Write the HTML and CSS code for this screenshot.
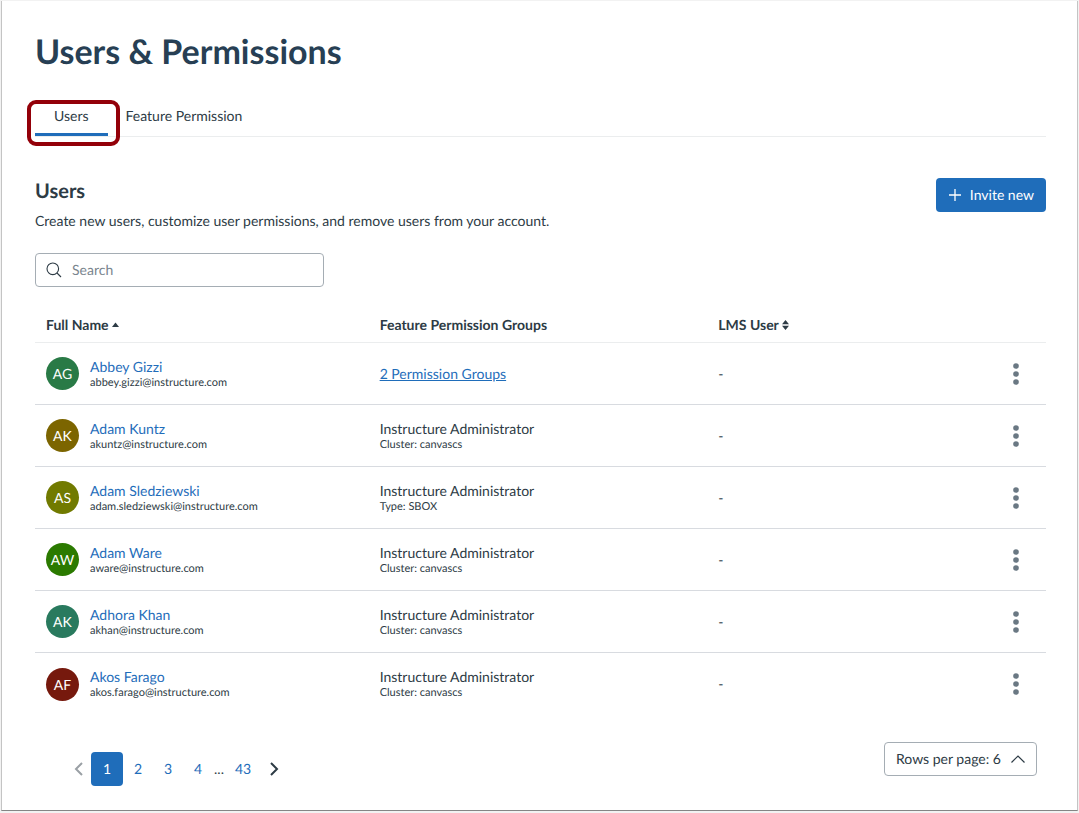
FILE: index.html
```html
<!DOCTYPE html>
<html lang="en">
<head>
    <meta charset="UTF-8">
    <meta name="viewport" content="width=device-width, initial-scale=1.0">
    <title>Users &amp; Permissions</title>
    <link rel="stylesheet" href="styles.css">
</head>
<body>
    <main class="page">
        <h1>Users &amp; Permissions</h1>

        <div class="tabs" role="tablist">
            <button class="tab active" role="tab" aria-selected="true">Users<span class="highlight"></span></button>
            <button class="tab" role="tab" aria-selected="false">Feature Permission</button>
        </div>

        <section class="intro">
            <div>
                <h2>Users</h2>
                <p>Create new users, customize user permissions, and remove users from your account.</p>
            </div>
            <button class="invite">
                <svg width="12" height="12" viewBox="0 0 12 12"><path d="M6 0v12M0 6h12" stroke="currentColor" stroke-width="1.3"/></svg>
                Invite new
            </button>
        </section>

        <label class="search">
            <svg width="16" height="16" viewBox="0 0 16 16" fill="none" stroke="currentColor" stroke-width="1.1"><circle cx="6.8" cy="6.8" r="5.8"/><path d="M11 11l4 4"/></svg>
            <input type="text" placeholder="Search" aria-label="Search">
        </label>

        <table class="users">
            <thead>
                <tr>
                    <th class="col-name">Full Name <svg class="sort" width="7" height="10" viewBox="0 0 7 10"><path d="M0 7L3.5 2.500 7 7z"/></svg></th>
                    <th class="col-groups">Feature Permission Groups</th>
                    <th class="col-lms">LMS User <svg class="sort" width="7" height="10" viewBox="0 0 7 10"><path d="M0 4.300L3.5 0 7 4.300zM0 5.700h7L3.5 10z"/></svg></th>
                    <th class="col-menu"></th>
                </tr>
            </thead>
            <tbody>
                <tr>
                    <td><div class="user"><span class="avatar green">AG</span><div><a class="name" href="#">Abbey Gizzi</a><span class="small">abbey.gizzi@instructure.com</span></div></div></td>
                    <td><a class="groups" href="#">2 Permission Groups</a></td>
                    <td>-</td>
                    <td class="col-menu"><button class="menu" aria-label="Options for Abbey Gizzi"><svg width="6" height="22" viewBox="0 0 6 22"><circle cx="3" cy="3" r="2.8"/><circle cx="3" cy="11" r="2.8"/><circle cx="3" cy="19" r="2.8"/></svg></button></td>
                </tr>
                <tr>
                    <td><div class="user"><span class="avatar brown">AK</span><div><a class="name" href="#">Adam Kuntz</a><span class="small">akuntz@instructure.com</span></div></div></td>
                    <td><span class="role">Instructure Administrator</span><span class="small">Cluster: canvascs</span></td>
                    <td>-</td>
                    <td class="col-menu"><button class="menu" aria-label="Options for Adam Kuntz"><svg width="6" height="22" viewBox="0 0 6 22"><circle cx="3" cy="3" r="2.8"/><circle cx="3" cy="11" r="2.8"/><circle cx="3" cy="19" r="2.8"/></svg></button></td>
                </tr>
                <tr>
                    <td><div class="user"><span class="avatar olive">AS</span><div><a class="name" href="#">Adam Sledziewski</a><span class="small">adam.sledziewski@instructure.com</span></div></div></td>
                    <td><span class="role">Instructure Administrator</span><span class="small">Type: SBOX</span></td>
                    <td>-</td>
                    <td class="col-menu"><button class="menu" aria-label="Options for Adam Sledziewski"><svg width="6" height="22" viewBox="0 0 6 22"><circle cx="3" cy="3" r="2.8"/><circle cx="3" cy="11" r="2.8"/><circle cx="3" cy="19" r="2.8"/></svg></button></td>
                </tr>
                <tr>
                    <td><div class="user"><span class="avatar grass">AW</span><div><a class="name" href="#">Adam Ware</a><span class="small">aware@instructure.com</span></div></div></td>
                    <td><span class="role">Instructure Administrator</span><span class="small">Cluster: canvascs</span></td>
                    <td>-</td>
                    <td class="col-menu"><button class="menu" aria-label="Options for Adam Ware"><svg width="6" height="22" viewBox="0 0 6 22"><circle cx="3" cy="3" r="2.8"/><circle cx="3" cy="11" r="2.8"/><circle cx="3" cy="19" r="2.8"/></svg></button></td>
                </tr>
                <tr>
                    <td><div class="user"><span class="avatar teal">AK</span><div><a class="name" href="#">Adhora Khan</a><span class="small">akhan@instructure.com</span></div></div></td>
                    <td><span class="role">Instructure Administrator</span><span class="small">Cluster: canvascs</span></td>
                    <td>-</td>
                    <td class="col-menu"><button class="menu" aria-label="Options for Adhora Khan"><svg width="6" height="22" viewBox="0 0 6 22"><circle cx="3" cy="3" r="2.8"/><circle cx="3" cy="11" r="2.8"/><circle cx="3" cy="19" r="2.8"/></svg></button></td>
                </tr>
                <tr>
                    <td><div class="user"><span class="avatar red">AF</span><div><a class="name" href="#">Akos Farago</a><span class="small">akos.farago@instructure.com</span></div></div></td>
                    <td><span class="role">Instructure Administrator</span><span class="small">Cluster: canvascs</span></td>
                    <td>-</td>
                    <td class="col-menu"><button class="menu" aria-label="Options for Akos Farago"><svg width="6" height="22" viewBox="0 0 6 22"><circle cx="3" cy="3" r="2.8"/><circle cx="3" cy="11" r="2.8"/><circle cx="3" cy="19" r="2.8"/></svg></button></td>
                </tr>
            </tbody>
        </table>

        <div class="table-footer">
            <nav class="pagination" aria-label="Pages">
                <button class="arrow" aria-label="Previous page" disabled><svg width="9" height="14" viewBox="0 0 9 14"><path d="M8 1L2 7l6 6"/></svg></button>
                <button class="page-number current" aria-current="page">1</button>
                <button class="page-number">2</button>
                <button class="page-number">3</button>
                <button class="page-number">4</button>
                <span class="dots">...</span>
                <button class="page-number last">43</button>
                <button class="arrow next" aria-label="Next page"><svg width="9" height="14" viewBox="0 0 9 14"><path d="M1 1l6 6-6 6"/></svg></button>
            </nav>
            <div class="rows">
                <select aria-label="Rows per page">
                    <option>Rows per page: 6</option>
                    <option>Rows per page: 12</option>
                    <option>Rows per page: 24</option>
                </select>
                <svg width="14" height="8" viewBox="0 0 14 8"><path d="M0.5 7.5L7 1l6.500 6.500"/></svg>
            </div>
        </div>
    </main>
</body>
</html>
```

FILE: styles.css
```css
:root {
    --blue: #1f6dba;
    --ink: #2d3b45;
    --heading: #273f54;
    --line: #d8dbe0;
    --line-light: #ebedee;
    --field-border: #a5adb4;
}

* {
    box-sizing: border-box;
}

body {
    margin: 0;
    padding: 1px;
    background-color: #f2f2f2;
    color: var(--ink);
    font-family: Lato, sans-serif;
    font-size: 14px;
    line-height: 20px;
    text-rendering: geometricPrecision;
}

button,
input,
select {
    font: inherit;
    color: inherit;
    text-rendering: inherit;
}

button {
    padding: 0;
    border: none;
    background: none;
    cursor: pointer;
}

.page {
    padding: 29px 31px 24px 33px;
    background-color: white;
    border: 1px solid #c4c4c4;
    border-top: none;
    border-bottom: 1px solid #858585;
}

h1 {
    margin: 0;
    color: var(--heading);
    font-size: 34px;
    line-height: 44px;
    font-weight: 700;
}

.tabs {
    display: flex;
    margin-top: 27px;
    border-bottom: 1px solid var(--line-light);
}

.tab {
    position: relative;
    height: 35px;
    padding: 0 18px 3px;
    border-bottom: 3px solid transparent;
}

.tab.active {
    padding: 0 19px 3px;
    border-bottom-color: var(--blue);
}

/* red callout ring around the current tab */
.highlight {
    position: absolute;
    top: -1px;
    right: -12px;
    bottom: -13px;
    left: -8px;
    border: 4px solid #930009;
    border-radius: 9px;
}

.intro {
    display: flex;
    justify-content: space-between;
    align-items: flex-start;
    margin-top: 41px;
}

h2 {
    margin: 0;
    font-size: 20px;
    line-height: 26px;
    font-weight: 700;
}

.intro p {
    margin: 7px 0 0;
}

.invite {
    display: flex;
    align-items: center;
    gap: 9px;
    height: 34px;
    padding: 0 12px 0 13px;
    background-color: var(--blue);
    color: white;
    border-radius: 4px;
}

.search {
    display: flex;
    align-items: center;
    gap: 10px;
    width: 289px;
    height: 34px;
    margin-top: 22px;
    padding: 0 10px;
    border: 1px solid var(--field-border);
    border-radius: 4px;
}

.search input {
    flex: 1;
    min-width: 0;
    padding: 0;
    border: none;
    outline: none;
}

.search input::placeholder {
    color: #7a858e;
    opacity: 1;
}

.users {
    width: 100%;
    margin-top: 20px;
    border-collapse: separate;
    border-spacing: 0;
    table-layout: fixed;
}

th,
td {
    padding: 0 11px;
    text-align: left;
}

th {
    height: 36px;
    border-bottom: 1px solid var(--line-light);
    font-weight: 700;
}

td {
    height: 62px;
    border-bottom: 1px solid var(--line);
}

tbody tr:last-child td {
    border-bottom: none;
}

.col-name {
    width: 33%;
}

.col-groups {
    width: 33.500%;
}

.col-menu {
    text-align: right;
}

.sort {
    fill: currentColor;
}

.user {
    display: flex;
    align-items: center;
    gap: 11px;
}

.avatar {
    width: 33px;
    height: 33px;
    border-radius: 50%;
    color: white;
    line-height: 33px;
    text-align: center;
}

.green { background-color: #297a46; }
.brown { background-color: #7c6500; }
.olive { background-color: #717a00; }
.grass { background-color: #2b7a00; }
.teal { background-color: #297a5e; }
.red { background-color: #76190d; }

.name,
.role {
    display: block;
    line-height: 18px;
}

.small {
    display: block;
    font-size: 11px;
    line-height: 14px;
}

.name,
.groups {
    color: var(--blue);
}

.name {
    text-decoration: none;
}

.menu {
    padding: 0 16px;
    line-height: 0;
    vertical-align: middle;
}

.menu svg {
    fill: #6a7883;
}

.table-footer {
    display: flex;
    justify-content: space-between;
    align-items: flex-start;
    margin-top: 27px;
    padding: 0 9px 0 34px;
}

.pagination {
    display: flex;
    align-items: center;
    height: 34px;
    margin-top: 10px;
}

.page-number {
    min-width: 30px;
    color: var(--blue);
}

.page-number.current {
    width: 32px;
    height: 34px;
    background-color: var(--blue);
    color: white;
    border-radius: 4px;
}

.page-number.last {
    min-width: 36px;
}

.dots {
    width: 12px;
    text-align: center;
}

.arrow {
    width: 22px;
    height: 34px;
    padding-right: 4px;
    line-height: 0;
}

.arrow.next {
    width: 26px;
    padding: 0;
}

.arrow svg,
.rows svg {
    fill: none;
    stroke: currentColor;
    stroke-width: 2;
}

.arrow:disabled {
    color: #9aa0a5;
}

.rows {
    position: relative;
}

.rows select {
    width: 153px;
    height: 34px;
    padding: 0 11px;
    appearance: none;
    background-color: white;
    border: 1px solid var(--field-border);
    border-radius: 4px;
}

/* chevron sits over the select */
.rows svg {
    position: absolute;
    top: 13px;
    right: 12px;
    stroke-width: 1.2;
    pointer-events: none;
}
```
